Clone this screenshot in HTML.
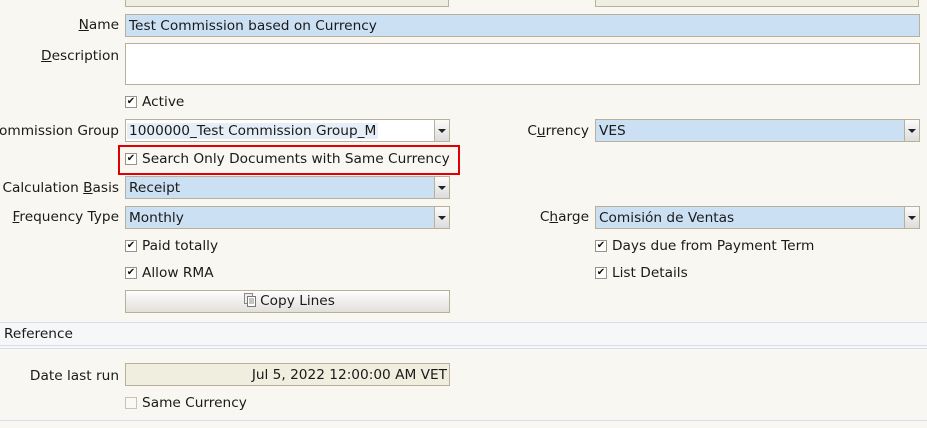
<!DOCTYPE html>
<html><head><style>
body{margin:0;width:927px;height:428px;background:#f9f7f1;font-family:"DejaVu Sans",sans-serif;font-size:13.7px;color:#1a1a1a;position:relative;overflow:hidden}
.a{position:absolute}
.lbl{position:absolute;text-align:right;white-space:nowrap}
.f{position:absolute;box-sizing:border-box;border:1px solid #b9b09a;height:23px;line-height:22px;padding-left:3px;white-space:nowrap;overflow:hidden}
.blue{background:#cce0f4}
.dd{position:absolute;right:0;top:0;width:14px;height:21px;border-left:1px solid #b9b09a;background:linear-gradient(#fbfbfb,#dcdcdc)}
.dd:after{content:"";position:absolute;left:3px;top:9px;border-left:4px solid transparent;border-right:4px solid transparent;border-top:4px solid #222}
.cb{position:absolute;width:10px;height:10px;border:1px solid #9a9488;background:#fff;font-size:10px;line-height:10px;text-align:center;color:#111}
.ct{position:absolute;white-space:nowrap}
.hl{position:absolute;left:0;right:0;height:1px;background:#d4def0}
u{text-decoration:underline}
</style></head><body>
<div class="f" style="left:125px;top:-16px;width:324px;background:#f0eee0"></div>
<div class="f" style="left:595px;top:-16px;width:324px;background:#f0eee0"></div>

<div class="lbl" style="right:808px;top:17px"><u>N</u>ame</div>
<div class="f blue" style="left:125px;top:14px;width:795px">Test Commission based on Currency</div>

<div class="lbl" style="right:808px;top:48px"><u>D</u>escription</div>
<div class="f" style="left:125px;top:43px;width:795px;height:42px;background:#fff"></div>

<div class="cb" style="left:125px;top:96px">✔</div><div class="ct" style="left:142px;top:94px">Active</div>

<div class="lbl" style="right:808px;top:123px">Commission Group</div>
<div class="f" style="left:125px;top:119px;width:325px;background:#fff;padding-left:1px"><span style="background:#e6eef8;padding:0 2px">1000000_Test Commission Group_M</span><div class="dd"></div></div>
<div class="lbl" style="right:338px;top:123px">C<u>u</u>rrency</div>
<div class="f blue" style="left:595px;top:119px;width:325px">VES<div class="dd"></div></div>

<div class="a" style="left:118px;top:145px;width:338px;height:26px;border:2px solid #e00000"></div>
<div class="cb" style="left:125px;top:153px">✔</div><div class="ct" style="left:142px;top:151px">Search Only Documents with Same Currency</div>

<div class="lbl" style="right:808px;top:180px">Calculation <u>B</u>asis</div>
<div class="f blue" style="left:125px;top:176px;width:325px">Receipt<div class="dd"></div></div>

<div class="lbl" style="right:808px;top:209px"><u>F</u>requency Type</div>
<div class="f blue" style="left:125px;top:206px;width:325px">Monthly<div class="dd"></div></div>
<div class="lbl" style="right:338px;top:209px">C<u>h</u>arge</div>
<div class="f blue" style="left:595px;top:206px;width:325px">Comisión de Ventas<div class="dd"></div></div>

<div class="cb" style="left:125px;top:240px">✔</div><div class="ct" style="left:142px;top:238px">Paid totally</div>
<div class="cb" style="left:595px;top:240px">✔</div><div class="ct" style="left:612px;top:238px">Days due from Payment Term</div>
<div class="cb" style="left:125px;top:267px">✔</div><div class="ct" style="left:142px;top:265px">Allow RMA</div>
<div class="cb" style="left:595px;top:267px">✔</div><div class="ct" style="left:612px;top:265px">List Details</div>

<div class="f" style="left:125px;top:290px;width:325px;text-align:center;background:linear-gradient(#fdfdfd,#e2e0da);line-height:21px">
<svg width="14" height="15" style="vertical-align:-3px;margin-right:3px" viewBox="0 0 14 15"><rect x="1.5" y="0.5" width="8" height="10" fill="#eee" stroke="#888"/><rect x="4.5" y="3.5" width="8" height="10" fill="#fff" stroke="#777"/><path d="M6 6h5M6 8h5M6 10h5" stroke="#888"/></svg>Copy Lines</div>

<div class="hl" style="top:322px"></div>
<div class="a" style="left:0;right:0;top:323px;height:22px;background:#f6f7f9"></div>
<div class="ct" style="left:4px;top:326px">Reference</div>
<div class="hl" style="top:345px"></div>
<div class="hl" style="top:348px"></div>

<div class="lbl" style="right:808px;top:368px">Date last run</div>
<div class="f" style="left:125px;top:363px;width:325px;background:#f0eedf;text-align:right;padding-right:2px">Jul 5, 2022 12:00:00 AM VET</div>
<div class="cb" style="left:125px;top:397px;border-color:#c8c3b8;background:#faf9f6"></div><div class="ct" style="left:142px;top:395px">Same Currency</div>
<div class="hl" style="top:420px"></div>
</body></html>
